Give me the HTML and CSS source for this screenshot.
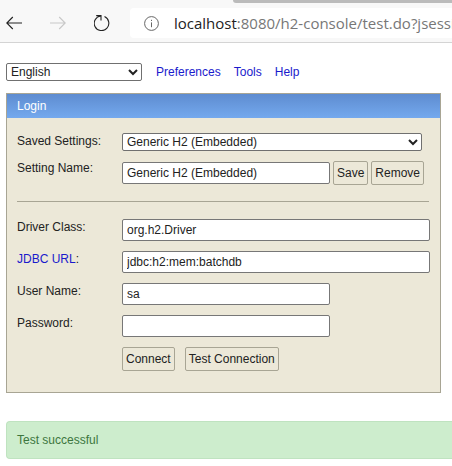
FILE: index.html
```html
<!DOCTYPE html>
<html lang="en">
<head>
<meta charset="UTF-8">
<meta name="viewport" content="width=device-width, initial-scale=1.0">
<title>H2 Console</title>
<link rel="stylesheet" href="styles.css">
</head>
<body>
<div class="toolbar">
  <div class="tab-edge"></div>
  <svg class="nav-icon" width="16" height="14" viewBox="0 0 16 14"><path d="M16 7H.8M6.8 1L.8 7l6 6" fill="none" stroke="#222" stroke-width="1.1"/></svg>
  <svg class="nav-icon forward" width="16" height="14" viewBox="0 0 16 14"><path d="M0 7h15.2M9.2 1l6 6-6 6" fill="none" stroke="#c8c8c8" stroke-width="1.1"/></svg>
  <svg class="nav-icon reload" width="16" height="16" viewBox="0 0 16 16"><path d="M10.5 1.6A7.3 7.3 0 1 1 6.8 1M2.2 .6H7V5.4" fill="none" stroke="#222" stroke-width="1.1"/></svg>
  <div class="address">
    <svg class="info" width="15" height="15" viewBox="0 0 15 15"><circle cx="7.5" cy="7.5" r="6.9" fill="none" stroke="#666" stroke-width="1"/><path d="M7.5 6.4v4.8M7.5 3.8v1.2" stroke="#666" stroke-width="1"/></svg>
    <span class="host">localhost</span><span class="url-rest">:8080/h2-console/test.do?jsessionid=a1</span>
  </div>
</div>

<div class="menu">
  <select class="lang"><option>English</option></select>
  <a href="#">Preferences</a>
  <a href="#">Tools</a>
  <a href="#">Help</a>
</div>

<div class="login">
  <div class="login-head">Login</div>
  <div class="login-body">
    <div class="row row-saved">
      <label>Saved Settings:</label>
      <select class="saved"><option>Generic H2 (Embedded)</option></select>
    </div>
    <div class="row row-name">
      <label>Setting Name:</label>
      <input class="short" type="text" value="Generic H2 (Embedded)">
      <button class="btn btn-side">Save</button>
      <button class="btn btn-side">Remove</button>
    </div>
    <hr>
    <div class="row">
      <label>Driver Class:</label>
      <input class="long" type="text" value="org.h2.Driver">
    </div>
    <div class="row">
      <label><a href="#">JDBC URL</a>:</label>
      <input class="long" type="text" value="jdbc:h2:mem:batchdb">
    </div>
    <div class="row">
      <label>User Name:</label>
      <input class="short" type="text" value="sa">
    </div>
    <div class="row">
      <label>Password:</label>
      <input class="short" type="password">
    </div>
    <div class="actions">
      <button class="btn">Connect</button>
      <button class="btn">Test Connection</button>
    </div>
  </div>
</div>

<div class="message">Test successful</div>
</body>
</html>
```

FILE: styles.css
```css
body {
  margin: 0;
  height: 466px;
  overflow: hidden;
  background-color: white;
  font-family: "Liberation Sans", Arial, sans-serif;
  font-size: 12px;
  color: #222;
}

a {
  color: #1a1acc;
  text-decoration: none;
}

/* browser bar */
.toolbar {
  position: relative;
  display: flex;
  align-items: center;
  height: 43px;
  padding: 4px 0 0 6px;
  box-sizing: border-box;
  background-color: #f8f8f8;
  border-bottom: 1px solid #d4d4d4;
}

.tab-edge {
  position: absolute;
  top: 0;
  left: 233px;
  right: 0;
  height: 3px;
  background-color: #bbb;
  border-bottom-left-radius: 3px;
}

.nav-icon {
  flex: none;
}

.forward {
  margin-left: 28px;
}

.reload {
  margin-left: 28px;
}

.address {
  display: flex;
  align-items: center;
  flex: 1;
  min-width: 0;
  height: 30px;
  margin-left: 20px;
  padding-left: 14px;
  background-color: white;
  border-radius: 4px 0 0 4px;
  font-family: "Open Sans", sans-serif;
  font-size: 15px;
  white-space: nowrap;
  overflow: hidden;
}

.info {
  flex: none;
  margin-right: 15px;
}

.host {
  color: #222;
}

.url-rest {
  color: #777;
}

/* top menu */
.menu {
  display: flex;
  align-items: center;
  height: 18px;
  margin: 20px 0 0 6px;
}

.menu a {
  margin-right: 13px;
}

.lang {
  width: 136px;
  height: 18px;
  margin-right: 14px;
}

select {
  padding: 0;
  font-family: inherit;
  font-size: 12px;
  color: #222;
  background-color: white;
  border: 1px solid #707070;
  border-radius: 2px;
}

/* login panel */
.login {
  width: 435px;
  margin: 12px 0 0 6px;
  box-sizing: border-box;
  border: 1px solid #a8a594;
}

.login-head {
  height: 24px;
  padding-left: 10px;
  line-height: 24px;
  color: white;
  background: linear-gradient(#5e8cd0, #74a9ee);
}

.login-body {
  height: 274px;
  padding: 15px 10px 0;
  box-sizing: border-box;
  background-color: #ece8d8;
}

.row {
  display: flex;
  align-items: flex-start;
  margin-bottom: 10px;
}

.row label {
  flex: none;
  width: 105px;
  padding-top: 1px;
  line-height: 14px;
}

.row-saved {
  height: 18px;
  margin-bottom: 10px;
}

.saved {
  width: 300px;
  height: 18px;
}

.row-name {
  align-items: center;
  height: 24px;
  margin-bottom: 16px;
}

.row-name label {
  align-self: flex-start;
  padding-top: 0;
}

input {
  height: 22px;
  padding: 0 4px;
  box-sizing: border-box;
  font-family: inherit;
  font-size: 12px;
  color: #222;
  background-color: white;
  border: 1px solid #777;
  border-radius: 2px;
}

.short {
  width: 208px;
}

.long {
  width: 308px;
}

.btn {
  height: 24px;
  padding: 0 3px;
  font-family: inherit;
  font-size: 12px;
  color: #222;
  background-color: #ece8d8;
  border: 1px solid #a8a594;
  border-radius: 2px;
}

.btn-side {
  margin-left: 3px;
}

hr {
  width: 412px;
  height: 1px;
  margin: 0 0 17px;
  background-color: #a8a594;
  border: 0;
}

.actions {
  display: flex;
  gap: 10px;
  margin: 10px 0 0 105px;
}

/* result message */
.message {
  height: 36px;
  margin: 28px 0 0 6px;
  padding-left: 10px;
  line-height: 36px;
  color: #3c763d;
  background-color: #cdedcd;
  border: 1px solid #bfe3c0;
  border-right: 0;
  border-radius: 4px 0 0 4px;
}
```
